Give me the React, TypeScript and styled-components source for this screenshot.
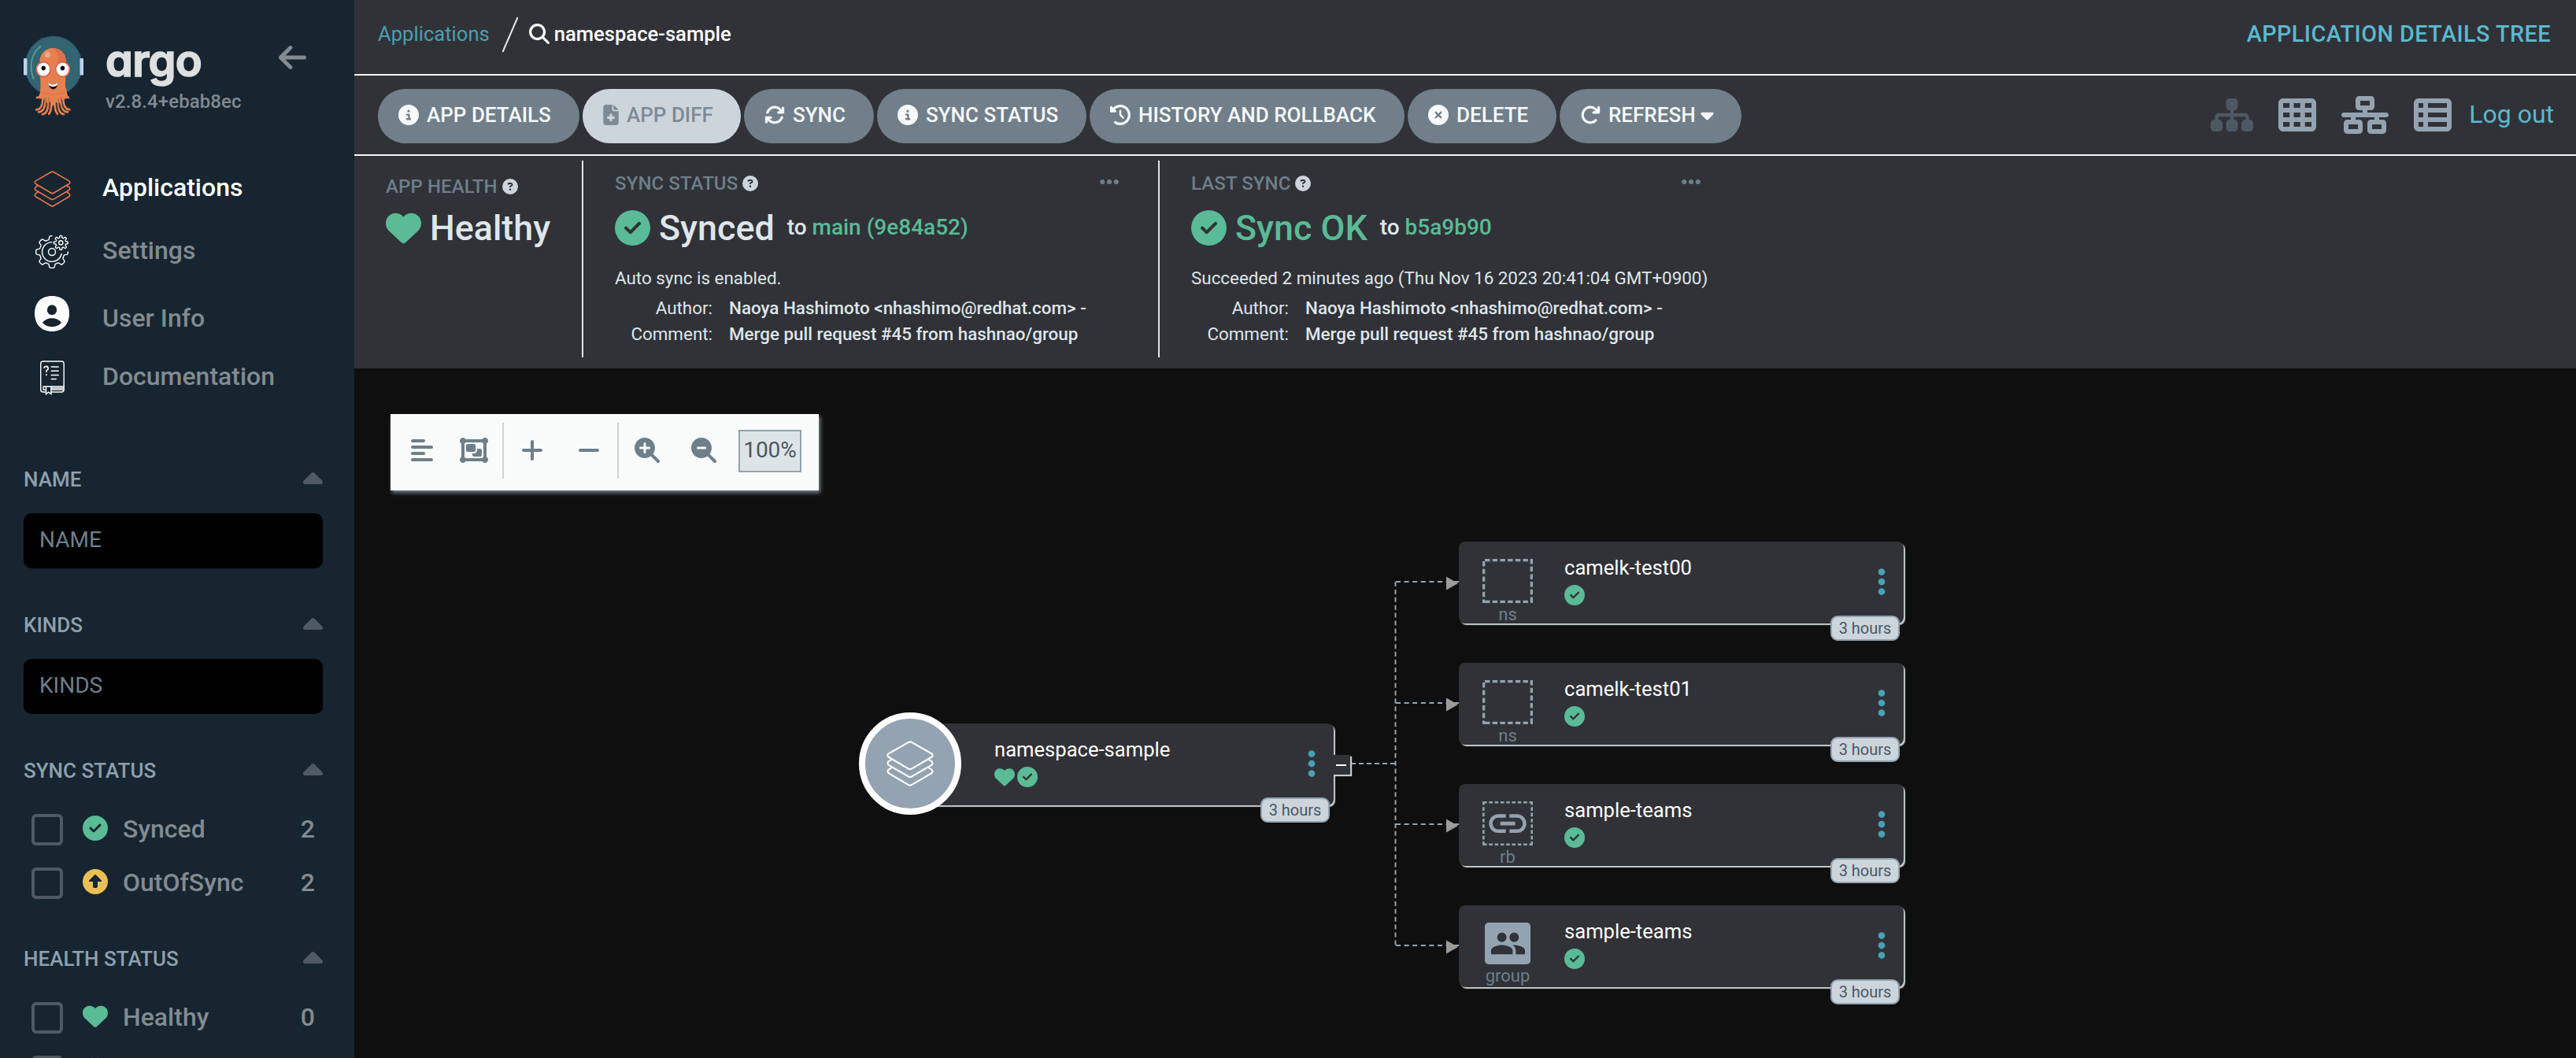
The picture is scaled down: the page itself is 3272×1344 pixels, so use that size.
import React from "react";
import styled, { createGlobalStyle } from "styled-components";
import {
  FaAlignLeft,
  FaArrowLeft,
  FaArrowRotateRight,
  FaArrowsRotate,
  FaCaretDown,
  FaCaretUp,
  FaCircleCheck,
  FaCircleInfo,
  FaCircleNotch,
  FaCircleQuestion,
  FaCircleUp,
  FaCircleXmark,
  FaClockRotateLeft,
  FaEllipsis,
  FaEllipsisVertical,
  FaFileMedical,
  FaHeart,
  FaMagnifyingGlass,
  FaMagnifyingGlassMinus,
  FaMagnifyingGlassPlus,
  FaMinus,
  FaNetworkWired,
  FaObjectGroup,
  FaPlus,
  FaSitemap,
  FaTableCells,
  FaTableList,
} from "react-icons/fa6";
import { MdLink, MdPeople } from "react-icons/md";

const color = {
  sidebar: "#162530",
  panel: "#313237",
  canvas: "#100f0f",
  line: "#f3f5f8",
  slate: "#6d7f8b",
  slateLight: "#94a3b1",
  pale: "#cdd5dc",
  text: "#dee6eb",
  green: "#5abb96",
  teal: "#499fb0",
  sky: "#5ab9d0",
  navText: "#838b91",
};

const GlobalStyle = createGlobalStyle`
  * { box-sizing: border-box; }
  body {
    margin: 0;
    background: ${color.canvas};
    font-family: Roboto, "Liberation Sans", sans-serif;
    overflow: hidden;
  }
  svg { display: block; flex: none; }
`;

const Page = styled.div`
  display: grid;
  grid-template-columns: 450px 1fr;
  width: 3272px;
  height: 1344px;
  overflow: hidden;
`;

/* ---------- Sidebar ---------- */

const Sidebar = styled.aside`
  display: flex;
  flex-direction: column;
  background: ${color.sidebar};
  overflow: hidden;
`;

const Brand = styled.div`
  display: flex;
  flex: none;
  align-items: flex-start;
  height: 203px;
  padding: 43px 61px 0 29px;
`;

const BrandText = styled.div`
  margin: 4px 0 0 27px;
`;

const BrandName = styled.div`
  font: 600 56px/60px Inter, sans-serif;
  font-feature-settings: "cv11" 1;
  letter-spacing: -0.7px;
  color: #dee0df;
  -webkit-text-stroke: 1.6px #dee0df;
`;

const Version = styled.div`
  margin-top: 7px;
  font-size: 24px;
  font-weight: 500;
  line-height: 30px;
  letter-spacing: 0.1px;
  color: ${color.navText};
  white-space: nowrap;
`;

const Collapse = styled.div`
  margin: 10px 0 0 auto;
  color: ${color.navText};
`;

const Nav = styled.nav`
  display: grid;
  flex: none;
  grid-template-rows: 70px 90px 82px 66px;
  padding-left: 43px;
`;

const NavItem = styled.a<{ $active?: boolean }>`
  display: grid;
  grid-template-columns: 46px 1fr;
  column-gap: 41px;
  align-items: center;
  font-size: 32px;
  font-weight: 500;
  color: ${(p) => (p.$active ? "#fff" : color.navText)};
`;

const NavIcon = styled.span<{ $nudge: number }>`
  display: flex;
  justify-content: center;
  margin-top: ${(p) => p.$nudge}px;
`;

const Filters = styled.div`
  display: flex;
  flex: none;
  flex-direction: column;
  margin-top: 80px;
  padding: 0 40px 0 30px;
`;

const FilterSection = styled.section<{ $after: number }>`
  margin-bottom: ${(p) => p.$after}px;
`;

const FilterHead = styled.div`
  display: flex;
  align-items: center;
  justify-content: space-between;
  height: 36px;
  font-size: 26px;
  font-weight: 500;
  color: #8fa0ae;
  svg {
    margin-top: 2px;
    color: #4f5a64;
  }
`;

const FilterInput = styled.div`
  display: flex;
  align-items: center;
  height: 70px;
  margin-top: 25px;
  padding: 0 20px 3px;
  border-radius: 10px;
  background: #000;
  font-size: 28px;
  color: ${color.slate};
`;

const FilterRows = styled.div`
  display: grid;
  row-gap: 28px;
  margin-top: 37px;
  padding: 0 10px;
`;

const FilterRow = styled.div`
  display: grid;
  grid-template-columns: 40px 32px 1fr auto;
  align-items: center;
  height: 40px;
  font-size: 32px;
  font-weight: 500;
  line-height: 36px;
  color: ${color.navText};
`;

const Checkbox = styled.span`
  width: 40px;
  height: 40px;
  border: 4px solid #4f5a64;
  border-radius: 6px;
`;

const FilterIcon = styled.span<{ $color: string }>`
  margin: -4px 0 0 25px;
  color: ${(p) => p.$color};
`;

const FilterLabel = styled.span`
  margin: -3px 0 0 44px;
`;

const FilterCount = styled.span`
  margin-top: -3px;
`;

/* ---------- Main column ---------- */

const Main = styled.main`
  display: flex;
  flex-direction: column;
  min-width: 0;
`;

const Breadcrumbs = styled.header`
  display: flex;
  flex: none;
  align-items: center;
  height: 96px;
  padding: 0 32px 9px 30px;
  border-bottom: 2px solid ${color.line};
  background: ${color.panel};
  font-size: 25.6px;
`;

const CrumbLink = styled.a`
  color: ${color.teal};
`;

const Slash = styled.svg`
  margin: 3px 13px 0 15px;
`;

const CrumbCurrent = styled.span`
  display: flex;
  gap: 6px;
  align-items: center;
  font-weight: 500;
  color: #fff;
`;

const ViewTitle = styled.span`
  margin-left: auto;
  font-size: 28.8px;
  font-weight: 500;
  letter-spacing: 0.46px;
  color: ${color.sky};
`;

const ActionBar = styled.div`
  display: flex;
  flex: none;
  align-items: flex-start;
  height: 102px;
  padding: 17px 28px 0 30px;
  border-bottom: 2px solid ${color.line};
  background: ${color.panel};
`;

const Actions = styled.div`
  display: flex;
  gap: 4px;
`;

const ActionButton = styled.button<{ $width: number; $disabled?: boolean }>`
  display: flex;
  gap: 10px;
  align-items: center;
  width: ${(p) => p.$width}px;
  height: 69px;
  padding: 0 0 4px 26px;
  border: 0;
  border-radius: 35px;
  background: ${(p) => (p.$disabled ? color.pale : "#707f8a")};
  font: 500 26px Roboto, sans-serif;
  white-space: nowrap;
  color: ${(p) => (p.$disabled ? "#7d8a95" : "#f8fafa")};
`;

const ActionLabel = styled.span`
  display: flex;
  gap: 6px;
  align-items: center;
`;

const ViewModes = styled.div`
  display: flex;
  gap: 32px;
  align-items: center;
  height: 66px;
  margin-left: auto;
  color: ${color.slateLight};
`;

const FadedIcon = styled.span`
  color: #4d5862;
`;

const Logout = styled.a`
  margin: -2px 0 0 -10px;
  font-size: 32px;
  color: ${color.sky};
`;

const StatusPanel = styled.section`
  display: flex;
  flex: none;
  height: 270px;
  padding: 6px 0 14px;
  background: ${color.panel};
`;

const StatusColumn = styled.div<{ $width: number; $top: number; $last?: boolean }>`
  display: flex;
  flex-direction: column;
  width: ${(p) => p.$width}px;
  padding: ${(p) => p.$top}px 48px 0 40px;
  border-right: ${(p) => (p.$last ? "0" : `2px solid ${color.text}`)};
  white-space: nowrap;
  color: ${color.text};
`;

const StatusLabel = styled.div`
  display: flex;
  gap: 6px;
  align-items: center;
  height: 32px;
  font-size: 24px;
  font-weight: 500;
  letter-spacing: 0.1px;
  color: ${color.slate};
`;

const HelpMark = styled.span`
  color: ${color.pale};
`;

const MoreDots = styled.span`
  margin: -4px 0 0 auto;
`;

const StatusTitle = styled.div<{ $gap: number; $color?: string }>`
  display: flex;
  gap: 11px;
  align-items: center;
  height: 56px;
  margin-top: ${(p) => p.$gap}px;
  font-size: 44.8px;
  font-weight: 500;
  color: ${(p) => p.$color ?? color.text};
  svg { color: ${color.green}; }
`;

const Revision = styled.span`
  margin: -2px 0 0 5px;
  font-size: 28px;
  color: ${color.text};
  em {
    font-style: normal;
    color: ${color.green};
  }
`;

const StatusNote = styled.div`
  margin: 20px 0 6px;
  font-size: 22.4px;
  line-height: 32px;
`;

const CommitInfo = styled.dl`
  display: grid;
  grid-template-columns: 124px 1fr;
  column-gap: 21px;
  margin: 0;
  font-size: 22.4px;
  line-height: 33px;
  dt { text-align: right; }
  dd { margin: 0; font-weight: 500; }
`;

/* ---------- Resource graph ---------- */

const Canvas = styled.section`
  position: relative;
  flex: 1;
  overflow: hidden;
  background: ${color.canvas};
`;

const GraphTools = styled.div`
  display: flex;
  align-items: center;
  width: 544px;
  height: 97px;
  margin: 58px 0 0 46px;
  padding: 0 22px 0 26px;
  background: #f8fbfa;
  box-shadow: 2px 3px 5px #75848f;
  color: ${color.slate};
`;

const ToolIcon = styled.span<{ $width: number }>`
  display: flex;
  justify-content: center;
  width: ${(p) => p.$width}px;
  margin-bottom: 5px;
`;

const ToolDivider = styled.span<{ $pull?: number }>`
  width: 2px;
  height: 71px;
  margin: 0 0 4px ${(p) => -(p.$pull ?? 0)}px;
  background: ${color.pale};
`;

const ZoomLevel = styled.span`
  display: flex;
  align-items: center;
  justify-content: center;
  width: 80px;
  height: 54px;
  margin: 0 0 3px auto;
  padding-bottom: 4px;
  border: 2px solid #92a3b1;
  background: #dde4e8;
  font-size: 28px;
  color: #495763;
`;

const Edges = styled.svg`
  position: absolute;
  left: 0;
  top: 0;
`;

const Node = styled.article<{ $x: number; $y: number }>`
  position: absolute;
  left: ${(p) => p.$x}px;
  top: ${(p) => p.$y}px;
  display: flex;
  width: 565px;
  height: 104px;
  border-radius: 8px;
  background: ${color.panel};
  box-shadow: 2px 2px 1px #c4cccf;
  color: #fff;
`;

const KindColumn = styled.div`
  display: flex;
  flex-direction: column;
  align-items: center;
  width: 124px;
  padding-top: 22px;
  font-size: 22px;
  line-height: 29px;
  color: ${color.slate};
`;

const NodeBody = styled.div`
  padding: 17px 0 0 10px;
  font-size: 25.6px;
  line-height: 32px;
  white-space: nowrap;
`;

const RootSpacer = styled.div`
  width: 124px;
`;

const NodeStatus = styled.div`
  display: flex;
  gap: 3px;
  align-items: center;
  margin-top: 6px;
  color: ${color.green};
`;

const NodeMenu = styled.span`
  align-self: center;
  margin: -2px 23px 0 auto;
  color: #48a2b5;
`;

const Age = styled.span`
  position: absolute;
  right: 5px;
  bottom: -22px;
  display: flex;
  align-items: center;
  justify-content: center;
  width: 88px;
  height: 32px;
  border: 2px solid #92a3b1;
  border-radius: 9px;
  background: ${color.pale};
  font-size: 20px;
  color: #495763;
`;

const RootBadge = styled.div`
  position: absolute;
  left: -38px;
  top: -14px;
  display: flex;
  align-items: center;
  justify-content: center;
  width: 130px;
  height: 130px;
  border: 8px solid #fff;
  border-radius: 50%;
  background: ${color.slateLight};
`;

const CollapseToggle = styled.span`
  position: absolute;
  left: 564px;
  top: 40px;
  display: flex;
  align-items: center;
  justify-content: center;
  width: 22px;
  height: 25px;
  background: ${color.panel};
  box-shadow: 2px 2px 1px #c4cccf;
  &::before {
    content: "";
    width: 13px;
    height: 2px;
    margin-left: -2px;
    background: #fff;
  }
`;

const GroupTile = styled.span`
  display: flex;
  align-items: center;
  justify-content: center;
  width: 58px;
  height: 56px;
  border-radius: 5px;
  background: ${color.slateLight};
  color: ${color.panel};
`;

/* ---------- Drawings ---------- */

const Mascot = () => (
  <svg width="78" height="105" viewBox="29 40 78 98" preserveAspectRatio="none" fill="none">
    <ellipse cx="68" cy="78" rx="36" ry="34.800" fill="#326472" stroke="#355a76" strokeWidth="1.2" />
    <rect x="30" y="69" width="4.5" height="20" rx="1.2" fill="#bdd3ea" />
    <rect x="101.5" y="69" width="4.5" height="20" rx="1.2" fill="#bdd3ea" />
    <path d="M51.3 55C42 61 35.500 76 42.600 93" stroke="#5c9995" strokeWidth="1.9" strokeLinecap="round" />
    <g stroke="#e6814f" strokeLinecap="round" strokeWidth="2.600">
      <path d="M53 105Q52 116 47 115.500M83 105Q84 116 87 115.500" />
      <path d="M54.500 106C55 124 53 129.500 46 130M80 106C79.500 124 82 129.500 88.500 130" />
      <path d="M58 106C58.500 127 56 132 49 132.800M76.500 106C76 127 79 132 86 132.800" />
      <path d="M61.500 106C62.500 129 60 134.500 54 135.300M73 106C72.500 129 75 134.500 81 135.300" />
      <path d="M65 106C66 128 65 132 62 135M69.500 106C69 128 70 132 73 135" />
    </g>
    <path
      d="M50.300 74C50.300 51 84.200 51 84.200 74L83 100C83 110 84 114 85 117L79 117L76 122L70 121L67 126L64 121L59 122L56 117L49.500 117C51 113 51.500 108 51.500 100Z"
      fill="#e6814f"
    />
    <path d="M67 57C77 57 84 63 84 74L72 74C76 68 73 60 67 57Z" fill="#df724b" />
    <circle cx="60.500" cy="64.500" r="3.600" fill="#f0a688" />
    <circle cx="55" cy="82" r="9.600" fill="#d9614a" />
    <circle cx="79.700" cy="82" r="9.600" fill="#d9614a" />
    <circle cx="55.200" cy="82" r="8" fill="#fff" />
    <circle cx="79.500" cy="82" r="8" fill="#fff" />
    <circle cx="55.200" cy="80.700" r="2.700" fill="#0b0b0b" />
    <circle cx="79.500" cy="80.700" r="2.700" fill="#0b0b0b" />
    <path d="M61 97.500C63 108.500 72.500 108.500 73.700 97.500C70 101 64.500 101 61 97.500Z" fill="#0b0b0b" />
    <path d="M61 97.500C64.500 101 70 101 73.700 97.500L72.800 101C69 103.300 65.500 103.300 62 101Z" fill="#fff" />
    <path d="M52 109.500Q68 114.500 83 109.500" stroke="#dd744c" strokeWidth="1.200" />
    <path d="M58 115V127M62 116V130M74 116V130M78 115V127" stroke="#a9573c" strokeWidth=".9" />
  </svg>
);

const Layers = ({ width, height, stroke, weight }: { width: number; height: number; stroke: string; weight: number }) => (
  <svg
    width={width}
    height={height}
    viewBox="-.5 -.5 47 43"
    preserveAspectRatio="none"
    fill="none"
    stroke={stroke}
    strokeWidth={weight}
    strokeLinejoin="round"
  >
    <path d="M21.500.900Q23 .200 24.500.900L44.300 11.500Q46.500 13.200 44.300 14.900L24.500 25.900Q23 26.700 21.500 25.900L1.700 14.900Q-.500 13.200 1.700 11.500Z" />
    <path d="M5 16.800L1.700 18.900Q-.300 20.700 1.700 22.400L21.500 33.200Q23 34 24.500 33.200L44.300 22.400Q46.300 20.700 44.300 18.900L41 16.800" />
    <path d="M5 24.500L1.700 26.600Q-.300 28.400 1.700 30.100L21.500 41.100Q23 41.900 24.500 41.100L44.300 30.100Q46.300 28.400 44.300 26.600L41 24.500" />
  </svg>
);

/** Outline of a gear with eight rounded teeth, swept from one angle to another. */
const gear = (cx: number, cy: number, mid: number, amp: number, from: number, to: number) => {
  const points: string[] = [];
  for (let deg = from; deg <= to; deg += 1.5) {
    const a = (deg * Math.PI) / 180;
    const r = mid + amp * Math.tanh(2.6 * Math.cos(8 * a));
    points.push(`${(cx + r * Math.cos(a)).toFixed(2)} ${(cy + r * Math.sin(a)).toFixed(2)}`);
  }
  return `M${points.join("L")}`;
};

const Gears = () => (
  <svg width="44" height="44" viewBox="44 276.500 44 44" fill="none" stroke="#fff" strokeWidth="1.400" strokeLinecap="round">
    <path d={gear(66, 298.5, 18.1, 2.3, 0, 270)} />
    <path d="M78.100 301A12.400 12.400 0 1 1 66 286.100" />
    <circle cx="66" cy="298.500" r="4.500" />
    <path d={gear(77.3, 286.9, 7.7, 1.3, 0, 360)} />
    <circle cx="77.300" cy="286.900" r="2.600" />
  </svg>
);

const Profile = () => (
  <svg width="44" height="45" viewBox="0 0 44 42" preserveAspectRatio="none">
    <path d="M22 0C36 0 44 8 44 20.500S36 42 22 42S0 33 0 20.500S8 0 22 0Z" fill="#fff" />
    <ellipse cx="22" cy="16.500" rx="6.200" ry="5.900" fill={color.sidebar} />
    <path d="M10 31.500C15 24.500 29 24.500 34 31.500C29 38 15 38 10 31.500Z" fill={color.sidebar} />
  </svg>
);

const Manual = () => (
  <svg
    width="32"
    height="44"
    viewBox="-.700 0 32 41"
    preserveAspectRatio="none"
    fill="none"
    stroke="#fff"
    strokeWidth="1.400"
    strokeLinecap="round"
  >
    <path d="M7 37.200H4Q1 37.200 1 34.200V4Q1 1 4 1H27.500Q30.500 1 30.500 4V34.200Q30.500 37.200 27.500 37.200H14.500" />
    <path d="M30.500 30.800H4.500Q4 32.500 4.500 34.500H7M14.500 34.500H30M14.500 32.700H30" />
    <path d="M7.800 31V39.700L11 37.500L14.200 39.700V31" />
    <path d="M14.500 7.500H23.500M14.500 12.400H23.500M14.500 17.200H23.500M14.500 22H20.500" />
    <path d="M5.200 8.500Q5.600 6.800 7.900 6.800Q10.500 7 10.500 9.400Q10.300 11 8.300 11.800V13.200M8.200 16.600V17" strokeWidth="1.700" />
  </svg>
);

const DashedSquare = ({ fine }: { fine?: boolean }) => {
  const w = fine ? 2.6 : 3.3;
  return (
    <svg width="64" height="56" viewBox="0 0 64 56" fill="none" stroke={color.slateLight} strokeWidth={w}>
      <path
        d={`M${fine ? 1 : 3} ${w / 2}H64M${fine ? 1 : 3} ${56 - w / 2}H64M${w / 2} ${fine ? 0 : 3}V56M${64 - w / 2} 0V56`}
        strokeDasharray={fine ? "4.6 2.7" : "6.4 3.3"}
      />
      {fine && (
        <g transform="translate(3.600 -.300) scale(2.370)" stroke="none">
          <MdLink size={24} color={color.slateLight} />
        </g>
      )}
    </svg>
  );
};

/* ---------- Data ---------- */

const children = [
  { name: "camelk-test00", kind: "ns" },
  { name: "camelk-test01", kind: "ns" },
  { name: "sample-teams", kind: "rb" },
  { name: "sample-teams", kind: "group" },
];

const kindIcon = (kind: string) => {
  if (kind === "group")
    return (
      <GroupTile>
        <MdPeople size={47} />
      </GroupTile>
    );
  return <DashedSquare fine={kind === "rb"} />;
};

const Commit = () => (
  <CommitInfo>
    <dt>Author:</dt>
    <dd>Naoya Hashimoto &lt;nhashimo@redhat.com&gt; -</dd>
    <dt>Comment:</dt>
    <dd>Merge pull request #45 from hashnao/group</dd>
  </CommitInfo>
);

const Help = () => (
  <HelpMark>
    <FaCircleQuestion size={20} />
  </HelpMark>
);

export default function App() {
  return (
    <Page>
      <GlobalStyle />
      <Sidebar>
        <Brand>
          <Mascot />
          <BrandText>
            <BrandName>argo</BrandName>
            <Version>v2.8.4+ebab8ec</Version>
          </BrandText>
          <Collapse>
            <FaArrowLeft style={{ width: 35, height: 40 }} />
          </Collapse>
        </Brand>
        <Nav>
          <NavItem $active>
            <NavIcon $nudge={4}>
              <Layers width={47} height={46} stroke="#ef7b4d" weight={1.4} />
            </NavIcon>
            Applications
          </NavItem>
          <NavItem>
            <NavIcon $nudge={4}>
              <Gears />
            </NavIcon>
            Settings
          </NavItem>
          <NavItem>
            <NavIcon $nudge={-11}>
              <Profile />
            </NavIcon>
            User Info
          </NavItem>
          <NavItem>
            <NavIcon $nudge={4}>
              <Manual />
            </NavIcon>
            Documentation
          </NavItem>
        </Nav>
        <Filters>
          {["NAME", "KINDS"].map((name) => (
            <FilterSection key={name} $after={54}>
              <FilterHead>
                {name}
                <FaCaretUp style={{ width: 25, height: 40 }} />
              </FilterHead>
              <FilterInput>{name}</FilterInput>
            </FilterSection>
          ))}
          <FilterSection $after={58}>
            <FilterHead>
              SYNC STATUS
              <FaCaretUp style={{ width: 25, height: 40 }} />
            </FilterHead>
            <FilterRows>
              <FilterRow>
                <Checkbox />
                <FilterIcon $color={color.green}>
                  <FaCircleCheck size={32} />
                </FilterIcon>
                <FilterLabel>Synced</FilterLabel>
                <FilterCount>2</FilterCount>
              </FilterRow>
              <FilterRow>
                <Checkbox />
                <FilterIcon $color="#eac054">
                  <FaCircleUp size={32} />
                </FilterIcon>
                <FilterLabel>OutOfSync</FilterLabel>
                <FilterCount>2</FilterCount>
              </FilterRow>
            </FilterRows>
          </FilterSection>
          <FilterSection $after={0}>
            <FilterHead>
              HEALTH STATUS
              <FaCaretUp style={{ width: 25, height: 40 }} />
            </FilterHead>
            <FilterRows>
              <FilterRow>
                <Checkbox />
                <FilterIcon $color={color.green}>
                  <FaHeart size={32} />
                </FilterIcon>
                <FilterLabel>Healthy</FilterLabel>
                <FilterCount>0</FilterCount>
              </FilterRow>
              <FilterRow>
                <Checkbox />
                <FilterIcon $color="#3b6f86">
                  <FaCircleNotch size={32} />
                </FilterIcon>
              </FilterRow>
            </FilterRows>
          </FilterSection>
        </Filters>
      </Sidebar>

      <Main>
        <Breadcrumbs>
          <CrumbLink>Applications</CrumbLink>
          <Slash width="22" height="46" viewBox="0 0 22 46" stroke={color.text} strokeWidth="2">
            <path d="M1.500 45L20.500 1" />
          </Slash>
          <CrumbCurrent>
            <FaMagnifyingGlass size={26} />
            namespace-sample
          </CrumbCurrent>
          <ViewTitle>APPLICATION DETAILS TREE</ViewTitle>
        </Breadcrumbs>

        <ActionBar>
          <Actions>
            <ActionButton $width={256}>
              <FaCircleInfo size={26} />
              APP DETAILS
            </ActionButton>
            <ActionButton $width={201} $disabled>
              <FaFileMedical style={{ width: 20, height: 26 }} />
              APP DIFF
            </ActionButton>
            <ActionButton $width={165}>
              <FaArrowsRotate size={26} />
              SYNC
            </ActionButton>
            <ActionButton $width={266}>
              <FaCircleInfo size={26} />
              SYNC STATUS
            </ActionButton>
            <ActionButton $width={400}>
              <FaClockRotateLeft size={26} />
              HISTORY AND ROLLBACK
            </ActionButton>
            <ActionButton $width={189}>
              <FaCircleXmark size={26} />
              DELETE
            </ActionButton>
            <ActionButton $width={231}>
              <FaArrowRotateRight size={26} />
              <ActionLabel>
                REFRESH
                <FaCaretDown style={{ width: 17, height: 26 }} />
              </ActionLabel>
            </ActionButton>
          </Actions>
          <ViewModes>
            <FadedIcon>
              <FaSitemap style={{ width: 54, height: 48 }} />
            </FadedIcon>
            <FaTableCells size={48} />
            <FaNetworkWired style={{ width: 60, height: 48 }} />
            <FaTableList size={48} />
            <Logout>Log out</Logout>
          </ViewModes>
        </ActionBar>

        <StatusPanel>
          <StatusColumn $width={291} $top={17}>
            <StatusLabel>
              APP HEALTH
              <Help />
            </StatusLabel>
            <StatusTitle $gap={8}>
              <FaHeart size={45} />
              Healthy
            </StatusTitle>
          </StatusColumn>
          <StatusColumn $width={732} $top={13}>
            <StatusLabel>
              SYNC STATUS
              <Help />
              <MoreDots>
                <FaEllipsis size={28} />
              </MoreDots>
            </StatusLabel>
            <StatusTitle $gap={12}>
              <FaCircleCheck size={45} />
              Synced
              <Revision>
                to <em>main (9e84a52)</em>
              </Revision>
            </StatusTitle>
            <StatusNote>Auto sync is enabled.</StatusNote>
            <Commit />
          </StatusColumn>
          <StatusColumn $width={737} $top={13} $last>
            <StatusLabel>
              LAST SYNC
              <Help />
              <MoreDots>
                <FaEllipsis size={28} />
              </MoreDots>
            </StatusLabel>
            <StatusTitle $gap={12} $color={color.green}>
              <FaCircleCheck size={45} />
              Sync OK
              <Revision>
                to <em>b5a9b90</em>
              </Revision>
            </StatusTitle>
            <StatusNote>Succeeded 2 minutes ago (Thu Nov 16 2023 20:41:04 GMT+0900)</StatusNote>
            <Commit />
          </StatusColumn>
        </StatusPanel>

        <Canvas>
          <GraphTools>
            <ToolIcon $width={28}>
              <FaAlignLeft style={{ width: 28, height: 32 }} />
            </ToolIcon>
            <ToolIcon $width={104}>
              <FaObjectGroup style={{ width: 36, height: 32 }} />
            </ToolIcon>
            <ToolDivider $pull={16} />
            <ToolIcon $width={72}>
              <FaPlus style={{ width: 28, height: 32 }} />
            </ToolIcon>
            <ToolIcon $width={72}>
              <FaMinus style={{ width: 28, height: 32 }} />
            </ToolIcon>
            <ToolDivider />
            <ToolIcon $width={72}>
              <FaMagnifyingGlassPlus size={32} />
            </ToolIcon>
            <ToolIcon $width={72}>
              <FaMagnifyingGlassMinus size={32} />
            </ToolIcon>
            <ZoomLevel>100%</ZoomLevel>
          </GraphTools>

          <Edges width="1420" height="876" fill="none" stroke={color.slateLight} strokeWidth="2">
            <path d="M1266 502H1322" strokeDasharray="6 4" />
            <path d="M1322.500 271V733" strokeDasharray="6 3.900" />
            {children.map((_, i) => (
              <g key={i}>
                <path d={`M1323 ${271 + i * 154}H1404`} strokeDasharray="6 4.600" />
                <path d={`M1387 ${264.5 + i * 154}L1402 ${273 + i * 154}L1387 ${281.5 + i * 154}Z`} fill="#9b9b9b" stroke="none" />
              </g>
            ))}
          </Edges>

          <Node $x={679} $y={451}>
            <CollapseToggle />
            <RootBadge>
              <Layers width={60} height={58} stroke="#fff" weight={1.6} />
            </RootBadge>
            <RootSpacer />
            <NodeBody>
              namespace-sample
              <NodeStatus>
                <FaHeart size={26} />
                <FaCircleCheck size={26} />
              </NodeStatus>
            </NodeBody>
            <NodeMenu>
              <FaEllipsisVertical style={{ width: 10, height: 40 }} />
            </NodeMenu>
            <Age>3 hours</Age>
          </Node>

          {children.map((child, i) => (
            <Node key={i} $x={1403} $y={220 + i * 154}>
              <KindColumn>
                {kindIcon(child.kind)}
                {child.kind}
              </KindColumn>
              <NodeBody>
                {child.name}
                <NodeStatus>
                  <FaCircleCheck size={26} />
                </NodeStatus>
              </NodeBody>
              <NodeMenu>
                <FaEllipsisVertical style={{ width: 10, height: 40 }} />
              </NodeMenu>
              <Age>3 hours</Age>
            </Node>
          ))}
        </Canvas>
      </Main>
    </Page>
  );
}
